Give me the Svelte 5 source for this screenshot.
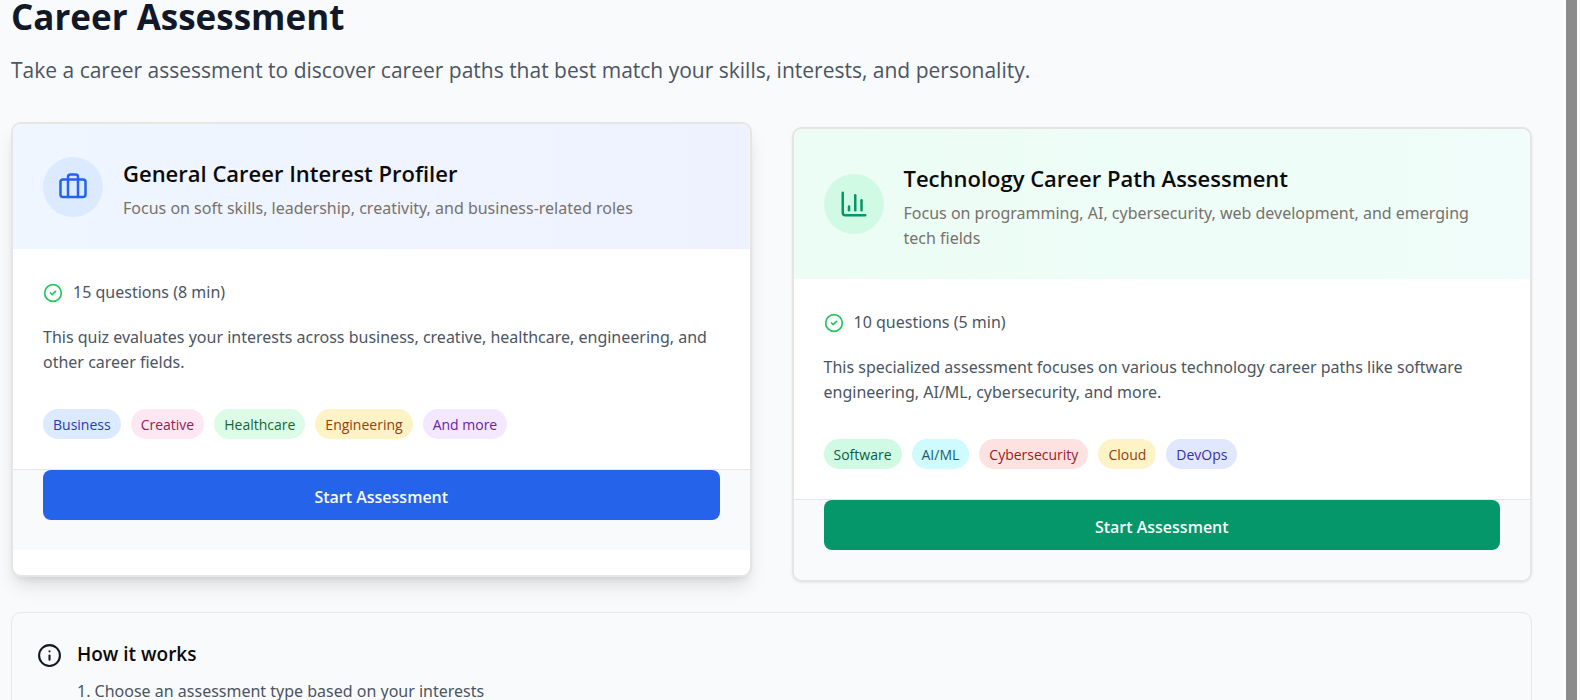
<script>
  const assessments = [
    {
      id: 'general',
      tone: 'blue',
      title: 'General Career Interest Profiler',
      focus: 'Focus on soft skills, leadership, creativity, and business-related roles',
      length: '15 questions (8 min)',
      summary:
        'This quiz evaluates your interests across business, creative, healthcare, engineering, and other career fields.',
      tags: [
        ['Business', 'blue'],
        ['Creative', 'pink'],
        ['Healthcare', 'green'],
        ['Engineering', 'amber'],
        ['And more', 'purple'],
      ],
    },
    {
      id: 'technology',
      tone: 'emerald',
      title: 'Technology Career Path Assessment',
      focus: 'Focus on programming, AI, cybersecurity, web development, and emerging tech fields',
      length: '10 questions (5 min)',
      summary:
        'This specialized assessment focuses on various technology career paths like software engineering, AI/ML, cybersecurity, and more.',
      tags: [
        ['Software', 'emerald'],
        ['AI/ML', 'cyan'],
        ['Cybersecurity', 'red'],
        ['Cloud', 'amber'],
        ['DevOps', 'indigo'],
      ],
    },
  ];

  let active = $state('general');
</script>

<div class="shell">
  <main>
    <h1>Career Assessment</h1>
    <p class="lead">
      Take a career assessment to discover career paths that best match your skills, interests, and personality.
    </p>

    <div class="cards">
      {#each assessments as item (item.id)}
        <article class="card {item.tone}" class:lifted={active === item.id}>
          <header>
            <span class="badge">
              <svg class="icon-lg" viewBox="0 0 24 24" aria-hidden="true">
                {#if item.id === 'general'}
                  <rect x="2" y="6" width="20" height="14" rx="2" />
                  <path d="M16 20V4a2 2 0 0 0-2-2h-4a2 2 0 0 0-2 2v16" />
                {:else}
                  <path d="M3 3v16a2 2 0 0 0 2 2h16" />
                  <path d="M18 17V9" />
                  <path d="M13 17V5" />
                  <path d="M8 17v-3" />
                {/if}
              </svg>
            </span>
            <div class="heading">
              <h2>{item.title}</h2>
              <p>{item.focus}</p>
            </div>
          </header>

          <div class="body">
            <div class="length">
              <svg class="icon-sm" viewBox="0 0 24 24" aria-hidden="true">
                <circle cx="12" cy="12" r="10" />
                <path d="m9 12 2 2 4-4" />
              </svg>
              <span>{item.length}</span>
            </div>
            <p class="summary">{item.summary}</p>
            <ul class="tags">
              {#each item.tags as [label, color]}
                <li class="tag {color}">{label}</li>
              {/each}
            </ul>
          </div>

          <footer>
            <button type="button" onclick={() => (active = item.id)}>Start Assessment</button>
          </footer>
        </article>
      {/each}
    </div>

    <section class="info">
      <svg class="icon-lg" viewBox="0 0 24 24" aria-hidden="true">
        <circle cx="12" cy="12" r="10" />
        <path d="M12 16v-4" />
        <path d="M12 8h.01" />
      </svg>
      <div>
        <h3>How it works</h3>
        <p>1. Choose an assessment type based on your interests</p>
      </div>
    </section>
  </main>
  <div class="track" aria-hidden="true"><div class="thumb"></div></div>
</div>

<style>
  :global(body) {
    margin: 0;
    background: #f9fafb;
  }

  .shell {
    display: flex;
    height: 100vh;
    overflow: hidden;
    font-family: 'Noto Sans', 'Open Sans', sans-serif;
    font-size: 16px;
    line-height: 25px;
    color: #4b5563;
    background: #f9fafb;
  }

  main {
    flex: 1;
    min-width: 0;
    padding: 0 31px 0 11px;
  }

  h1,
  h2,
  h3,
  p,
  ul {
    margin: 0;
    padding: 0;
  }

  h1,
  h2,
  h3,
  .lead,
  .tag,
  button {
    font-family: 'Open Sans', 'Noto Sans', sans-serif;
  }

  h1 {
    font-size: 35px;
    line-height: 34px;
    font-weight: 700;
    color: #111827;
  }

  .lead {
    margin: 19px 0 39px;
    font-size: 21px;
    line-height: 35px;
  }

  .cards {
    display: grid;
    grid-template-columns: 1fr 1fr;
    gap: 40px;
  }

  .card {
    overflow: hidden;
    border: 2px solid #e7e5e4;
    border-radius: 10px;
    background: #fff;
    box-shadow: 0 1px 3px rgb(0 0 0 / 0.08);
  }

  .card.lifted {
    transform: translateY(-5px);
    box-shadow:
      0 12px 19px -4px rgb(0 0 0 / 0.12),
      0 5px 8px -5px rgb(0 0 0 / 0.12);
  }

  header {
    display: flex;
    align-items: center;
    gap: 20px;
    padding: 28px 30px;
  }

  .blue header {
    background: linear-gradient(to right, #eff6ff, #eef2ff);
  }

  .emerald header {
    background: linear-gradient(to right, #ecfdf5, #f0fdfa);
  }

  svg {
    flex: none;
    fill: none;
    stroke: currentColor;
    stroke-width: 2;
    stroke-linecap: round;
    stroke-linejoin: round;
  }

  .icon-lg {
    width: 30px;
    height: 30px;
  }

  .icon-sm {
    width: 20px;
    height: 20px;
    color: #22c55e;
  }

  .badge {
    display: grid;
    place-items: center;
    flex: none;
    width: 60px;
    height: 60px;
    border-radius: 50%;
  }

  .blue .badge {
    color: #2563eb;
    background: #dbeafe;
  }

  .emerald .badge {
    color: #059669;
    background: #d1fae5;
  }

  .heading {
    padding-top: 4px;
  }

  h2 {
    margin-bottom: 5px;
    font-size: 22px;
    line-height: 35px;
    font-weight: 600;
    color: #0c0a09;
  }

  .heading p {
    color: #78716c;
  }

  .body {
    padding: 31px 30px 30px;
  }

  .length {
    display: flex;
    align-items: center;
    gap: 10px;
  }

  .summary {
    margin: 20px 0 34px;
  }

  .tags {
    display: flex;
    flex-wrap: wrap;
    gap: 10px;
    list-style: none;
  }

  .tag {
    padding: 2px 10px 0;
    border-radius: 15px;
    font-size: 14px;
    line-height: 28px;
  }

  .tag.blue { color: #1e40af; background: #dbeafe; }
  .tag.pink { color: #9d174d; background: #fce7f3; }
  .tag.green { color: #166534; background: #dcfce7; }
  .tag.amber { color: #92400e; background: #fef3c7; }
  .tag.purple { color: #6b21a8; background: #f3e8ff; }
  .tag.emerald { color: #065f46; background: #d1fae5; }
  .tag.cyan { color: #155e75; background: #cffafe; }
  .tag.red { color: #991b1b; background: #fee2e2; }
  .tag.indigo { color: #3730a3; background: #e0e7ff; }

  footer {
    padding: 0 30px 30px;
    border-top: 1px solid #e5e7eb;
    background: #f9fafb;
  }

  button {
    display: block;
    width: 100%;
    height: 50px;
    padding: 3px 0 0;
    border: 0;
    border-radius: 8px;
    font-size: 16px;
    font-weight: 600;
    color: #fafaf9;
    cursor: pointer;
  }

  .blue button {
    background: #2563eb;
  }

  .emerald button {
    background: #059669;
  }

  .info {
    display: flex;
    gap: 15px;
    margin-top: 30px;
    padding: 26px 25px;
    border: 1px solid #e5e7eb;
    border-radius: 10px;
  }

  .info .icon-lg {
    width: 25px;
    height: 25px;
    margin-top: 4px;
    color: #111827;
  }

  h3 {
    margin-bottom: 10px;
    font-size: 19px;
    line-height: 30px;
    font-weight: 600;
    color: #0c0a09;
  }

  .track {
    flex: none;
    width: 14px;
    padding-left: 3px;
    background: #fcfcfc;
  }

  .thumb {
    width: 11px;
    height: 100%;
    background: #8b8b8b;
  }
</style>
